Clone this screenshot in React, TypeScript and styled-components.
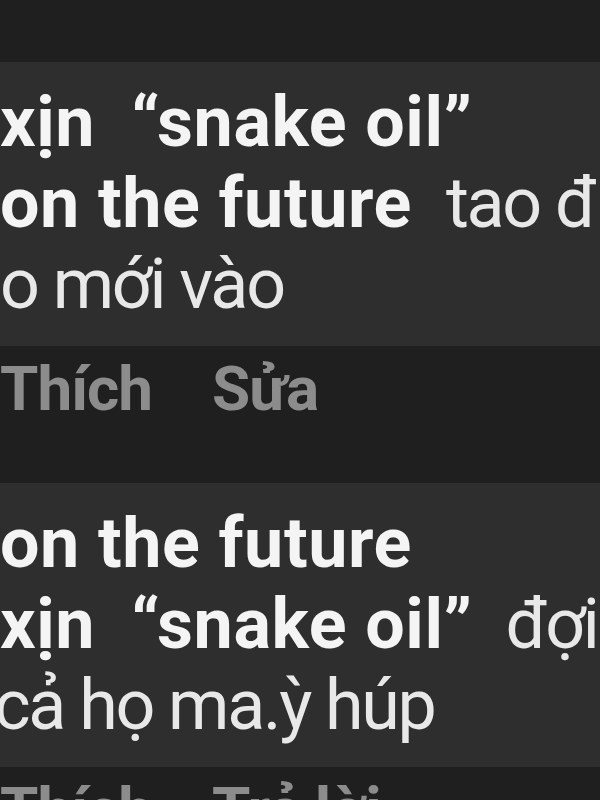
import React from 'react';
import styled, { createGlobalStyle } from 'styled-components';

const GlobalStyle = createGlobalStyle`
  html, body {
    margin: 0;
    padding: 0;
    background: #1f1f1f;
  }
  body {
    font-family: 'Roboto', 'Inter', 'Noto Sans', sans-serif;
    -webkit-font-smoothing: antialiased;
  }
`;

const Screen = styled.div`
  width: 600px;
  height: 800px;
  overflow: hidden;
  background: #1f1f1f;
  padding-top: 62px;
  box-sizing: border-box;
`;

const Comment = styled.div<{ $gap: number }>`
  display: flex;
  flex-direction: column;
  margin-bottom: ${p => p.$gap}px;
`;

const Bubble = styled.div`
  background: #2e2e2e;
  padding: 20px 0 21px 0;
  display: flex;
  flex-direction: column;
`;

const Line = styled.div<{ $indent?: number }>`
  font-size: 70px;
  line-height: 81px;
  white-space: pre;
  color: #e8e8e8;
  margin-left: ${p => p.$indent ?? 0}px;
`;

const Name = styled.span`
  font-weight: 700;
  color: #f4f4f4;
  letter-spacing: 0.6px;
`;

const Body = styled.span<{ $gap: number }>`
  font-weight: 400;
  margin-left: ${p => p.$gap}px;
  letter-spacing: -2.3px;
`;

const Actions = styled.div`
  display: flex;
  gap: 60px;
  margin-top: 8px;
  font-size: 62px;
  line-height: 70px;
  font-weight: 700;
  color: #8c8c8c;
  white-space: nowrap;
  letter-spacing: -1px;
`;

export default function App() {
  return (
    <>
      <GlobalStyle />
      <Screen>
        <Comment $gap={59}>
          <Bubble>
            <Line>
              <Name>xịn  “snake oil”</Name>
            </Line>
            <Line>
              <Name>on the future</Name>
              <Body $gap={34}>tao đ</Body>
            </Line>
            <Line>
              <Body $gap={0}>o mới vào</Body>
            </Line>
          </Bubble>
          <Actions>
            <span>Thích</span>
            <span>Sửa</span>
          </Actions>
        </Comment>
        <Comment $gap={0}>
          <Bubble>
            <Line>
              <Name>on the future</Name>
            </Line>
            <Line>
              <Name>xịn  “snake oil”</Name>
              <Body $gap={33}>đợi</Body>
            </Line>
            <Line $indent={-6}>
              <Body $gap={0}>cả họ ma.ỳ húp</Body>
            </Line>
          </Bubble>
          <Actions>
            <span>Thích</span>
            <span>Trả lời</span>
          </Actions>
        </Comment>
      </Screen>
    </>
  );
}
